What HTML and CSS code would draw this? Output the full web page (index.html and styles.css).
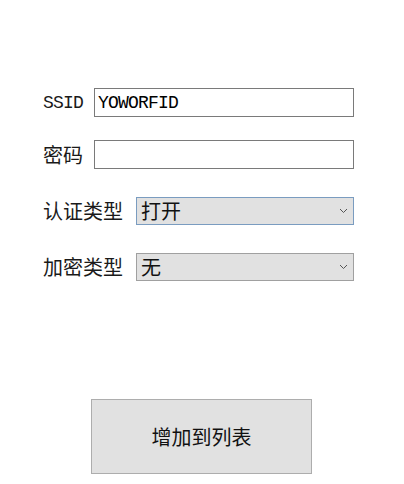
FILE: index.html
```html
<!DOCTYPE html>
<html lang="zh-CN">
<head>
    <meta charset="UTF-8">
    <meta name="viewport" content="width=device-width, initial-scale=1.0">
    <title>WiFi</title>
    <link rel="stylesheet" href="styles.css">
</head>
<body>
    <form class="wifi-form">
        <div class="form-row row-ssid">
            <label class="label latin" for="ssid">SSID</label>
            <input type="text" id="ssid" class="text-input latin" value="YOWORFID">
        </div>
        <div class="form-row row-pass">
            <label class="label" for="password">密码</label>
            <input type="password" id="password" class="text-input">
        </div>
        <div class="form-row row-auth">
            <label class="label" for="auth">认证类型</label>
            <div class="select-wrap">
                <select id="auth" class="select focused">
                    <option>打开</option>
                    <option>WPA</option>
                    <option>WPA2</option>
                </select>
                <svg class="chevron" width="9" height="6" viewBox="0 0 9 6"><path d="M1 1l3.5 3.5L8 1" fill="none" stroke="#555" stroke-width="1"/></svg>
            </div>
        </div>
        <div class="form-row row-enc">
            <label class="label" for="enc">加密类型</label>
            <div class="select-wrap">
                <select id="enc" class="select">
                    <option>无</option>
                    <option>TKIP</option>
                    <option>AES</option>
                </select>
                <svg class="chevron" width="9" height="6" viewBox="0 0 9 6"><path d="M1 1l3.5 3.5L8 1" fill="none" stroke="#555" stroke-width="1"/></svg>
            </div>
        </div>
        <button type="button" class="add-btn">增加到列表</button>
    </form>
</body>
</html>
```

FILE: styles.css
```css
body {
    margin: 0;
    background: #fff;
    font-family: "Noto Sans CJK SC", "Liberation Serif", serif;
    font-size: 20px;
    color: #1a1a1a;
}
.wifi-form {
    display: flex;
    flex-direction: column;
    width: 311px;
    padding: 88px 0 0 43px;
}
.form-row {
    display: flex;
    align-items: center;
}
.row-pass { margin-top: 23px; }
.row-auth { margin-top: 28px; }
.row-enc { margin-top: 28px; }
.label {
    line-height: 1;
    white-space: nowrap;
}
.latin {
    font-family: "Liberation Mono", monospace;
    font-size: 18px;
    letter-spacing: -0.8px;
}
.label.latin { width: 40px; }
.row-pass .label { width: 40px; }
.text-input {
    box-sizing: border-box;
    display: block;
    margin-left: 11px;
    width: 260px;
    height: 29px;
    border: 1px solid #7a7a7a;
    padding: 0 3px;
    color: #000;
    outline: none;
}
.row-auth .label,
.row-enc .label { width: 80px; }
.select-wrap {
    position: relative;
    margin-left: 13px;
}
.select {
    appearance: none;
    -webkit-appearance: none;
    box-sizing: border-box;
    display: block;
    width: 218px;
    height: 28px;
    border: 1px solid #a0a0a0;
    border-radius: 0;
    background: #e1e1e1;
    padding: 0 4px;
    font-family: "Noto Sans CJK SC", serif;
    font-size: 20px;
    line-height: 26px;
    color: #111;
    outline: none;
}
.select.focused { border-color: #7a9cc0; }
.chevron {
    position: absolute;
    right: 6px;
    top: 11px;
    pointer-events: none;
}
.add-btn {
    box-sizing: border-box;
    margin: 118px 0 0 48px;
    width: 221px;
    height: 75px;
    border: 1px solid #adadad;
    background: #e1e1e1;
    font-family: "Noto Sans CJK SC", serif;
    font-size: 20px;
    color: #111;
}
```
